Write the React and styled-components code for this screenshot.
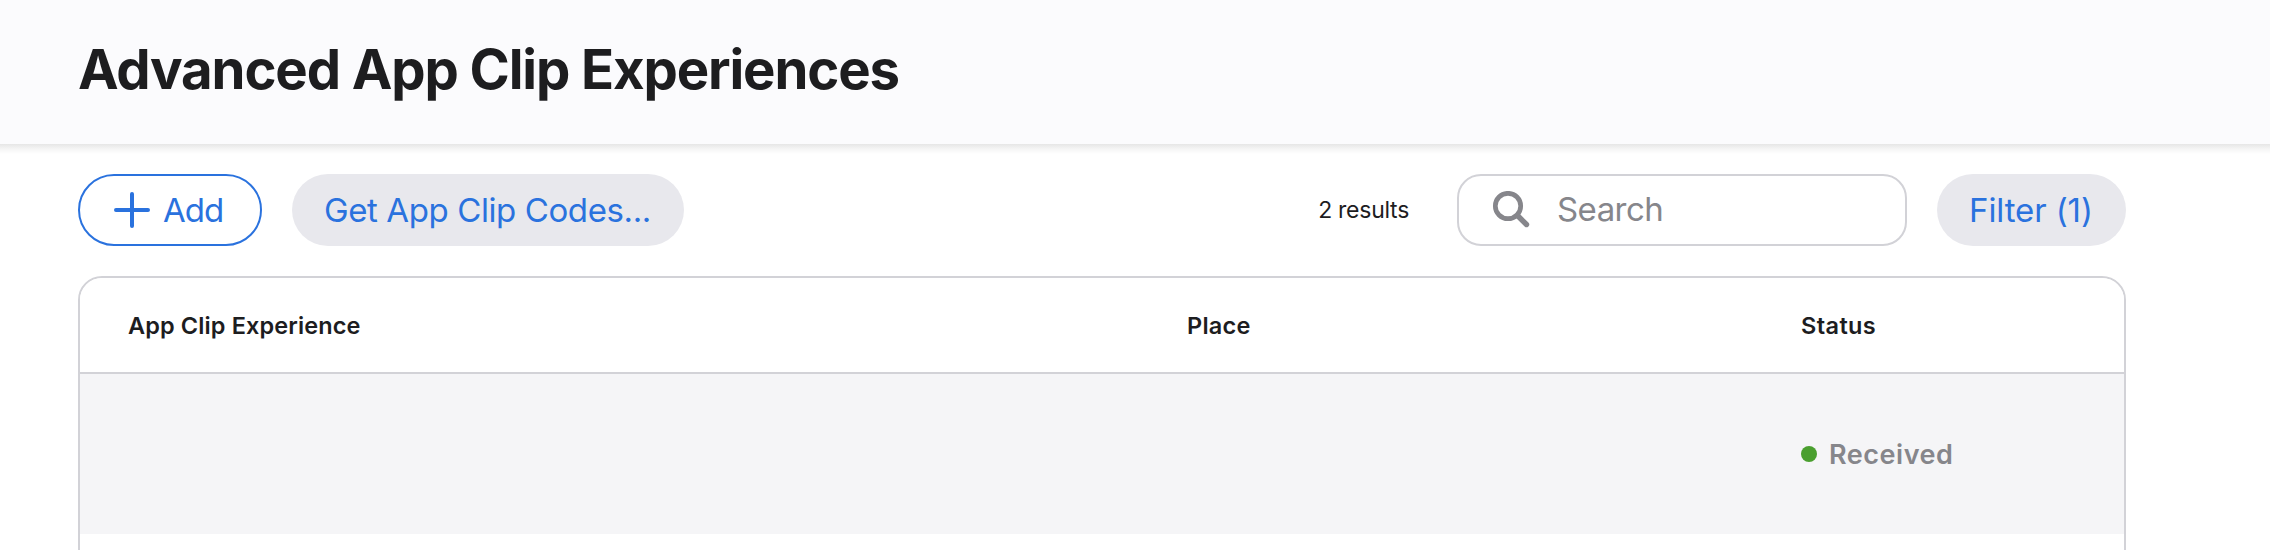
import React from "react";
import styled, { createGlobalStyle } from "styled-components";

const GlobalStyle = createGlobalStyle`
  * { box-sizing: border-box; }
  body {
    margin: 0;
    background: #fff;
    color: #1d1d1f;
    font-family: Inter, "Liberation Sans", sans-serif;
  }
`;

const Page = styled.div`
  height: 550px;
  overflow: hidden;
`;

const Header = styled.header`
  height: 144px;
  padding: 35px 78px 0;
  background: #fbfbfd;
`;

const Title = styled.h1`
  margin: 0;
  font-size: 54.5px;
  line-height: 68px;
  font-weight: 700;
  letter-spacing: -1.13px;
  white-space: nowrap;
`;

const HeaderShade = styled.div`
  height: 10px;
  background: linear-gradient(#e6e6e6, #f5f5f5 50%, #fff);
`;

const Content = styled.main`
  width: 2126px;
  padding: 20px 0 0 78px;
`;

const Toolbar = styled.div`
  display: flex;
  align-items: center;
  height: 72px;
  margin-bottom: 30px;
`;

const Button = styled.button`
  display: flex;
  align-items: center;
  flex: none;
  width: ${(p) => p.$width}px;
  height: 72px;
  margin: 0;
  padding: 0 0 0 ${(p) => p.$inset}px;
  border: ${(p) => (p.$outlined ? "2px solid #2a72de" : "0")};
  border-radius: 36px;
  background: ${(p) => (p.$outlined ? "#fff" : "#e8e8ed")};
  color: #2a72de;
  font: 400 33px/40px Inter, "Liberation Sans", sans-serif;
  letter-spacing: ${(p) => p.$tracking}px;
  white-space: nowrap;

  & + & { margin-left: 30px; }
  svg { margin-right: 13px; }
`;

const Results = styled.span`
  margin-left: auto;
  margin-right: 48px;
  font-size: 23px;
  line-height: 28px;
  letter-spacing: -0.27px;
`;

const SearchField = styled.label`
  display: flex;
  align-items: center;
  width: 450px;
  height: 72px;
  margin-right: 30px;
  padding-left: 33px;
  border: 2px solid #d2d2d7;
  border-radius: 24px;
  color: #86868b;
`;

const SearchInput = styled.input`
  flex: 1;
  min-width: 0;
  height: 40px;
  margin: 0 20px 2px 27px;
  padding: 0;
  border: 0;
  outline: 0;
  background: none;
  font: 400 33px/40px Inter, "Liberation Sans", sans-serif;
  letter-spacing: -0.55px;

  &::placeholder { color: #86868b; opacity: 1; }
`;

const Table = styled.section`
  height: 400px;
  border: 2px solid #d2d2d7;
  border-radius: 24px;
  overflow: hidden;
`;

const Row = styled.div`
  display: grid;
  grid-template-columns: 1059px 614px 1fr;
  align-items: center;
  height: 160px;
  padding-left: 48px;
  background: #f5f5f7;
`;

const HeadRow = styled(Row)`
  height: 96px;
  padding-top: 2px;
  background: #fff;
  border-bottom: 2px solid #d2d2d7;
`;

const HeadCell = styled.div`
  font-size: 23.5px;
  line-height: 28px;
  font-weight: 600;
  letter-spacing: ${(p) => p.$tracking}px;
`;

const Status = styled.div`
  grid-column: 3;
  display: flex;
  align-items: center;
  color: #86868b;
  font-size: 27px;
  line-height: 32px;
  font-weight: 600;
  letter-spacing: 0.53px;
`;

const StatusLabel = styled.span`
  padding-top: 1px;
`;

const Dot = styled.span`
  width: 16px;
  height: 16px;
  margin-right: 12px;
  border-radius: 50%;
  background: #4a9f2f;
`;

const PlusIcon = () => (
  <svg width="36" height="36" viewBox="0 0 36 36" fill="none" stroke="currentColor" strokeWidth="4" strokeLinecap="round">
    <path d="M18 2v32M2 18h32" />
  </svg>
);

const SearchIcon = () => (
  <svg width="38" height="38" viewBox="0 0 38 38" fill="none" stroke="currentColor" strokeLinecap="round">
    <circle cx="16" cy="15" r="12.7" strokeWidth="4.7" />
    <path d="M25.5 24.5l9 9" strokeWidth="5.4" />
  </svg>
);

export default function App() {
  return (
    <Page>
      <GlobalStyle />
      <Header>
        <Title>Advanced App Clip Experiences</Title>
      </Header>
      <HeaderShade />
      <Content>
        <Toolbar>
          <Button $outlined $width={184} $inset={34} $tracking={-1}>
            <PlusIcon />
            Add
          </Button>
          <Button $width={392} $inset={32} $tracking={-0.4}>Get App Clip Codes...</Button>
          <Results>2 results</Results>
          <SearchField>
            <SearchIcon />
            <SearchInput placeholder="Search" aria-label="Search" />
          </SearchField>
          <Button $width={189} $inset={32} $tracking={-0.1}>Filter (1)</Button>
        </Toolbar>
        <Table>
          <HeadRow>
            <HeadCell $tracking={0.12}>App Clip Experience</HeadCell>
            <HeadCell $tracking={0.25}>Place</HeadCell>
            <HeadCell $tracking={0.4}>Status</HeadCell>
          </HeadRow>
          <Row>
            <Status>
              <Dot />
              <StatusLabel>Received</StatusLabel>
            </Status>
          </Row>
        </Table>
      </Content>
    </Page>
  );
}
